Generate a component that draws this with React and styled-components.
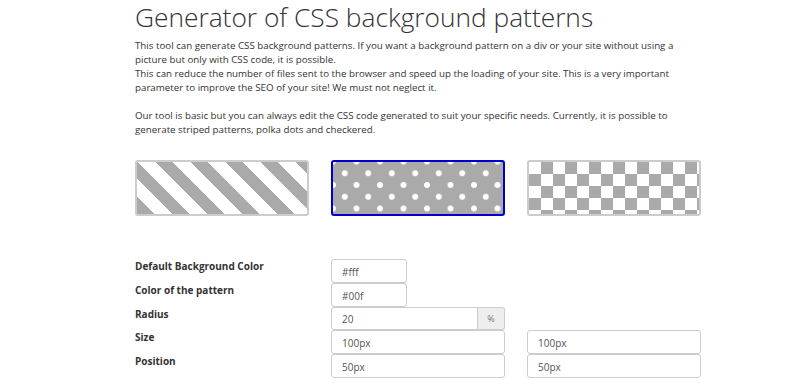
import React from 'react';
import styled, { createGlobalStyle, css } from 'styled-components';

const GlobalStyle = createGlobalStyle`
  html, body {
    margin: 0;
    padding: 0;
    background: #fff;
  }
  body {
    font-family: "Open Sans", "Liberation Sans", sans-serif;
    color: #333;
  }
`;

const Page = styled.div`
  width: 566px;
  padding: 0 0 0 135px;
`;

const Title = styled.h1`
  margin: 0;
  padding-top: 2px;
  font-size: 26.3px;
  line-height: 30px;
  font-weight: 300;
  color: #333;
`;

const Intro = styled.p`
  margin: 7px 0 0 0;
  width: 545px;
  font-size: 9.75px;
  line-height: 14px;
  color: #333;
`;

const PatternRow = styled.div`
  display: grid;
  grid-template-columns: repeat(3, 174px);
  column-gap: 22px;
  margin-top: 23px;
`;

const stripes = css`
  background-color: #fff;
  background-image: repeating-linear-gradient(
    45deg,
    #aaa 0 12.4px,
    #fff 12.4px 24.8px
  );
`;

const dots = css`
  background-color: #aaa;
  background-image: radial-gradient(circle, #fff 2.7px, transparent 3.2px),
    radial-gradient(circle, #fff 2.7px, transparent 3.2px);
  background-size: 23.5px 23.5px;
  background-position: 0 -0.5px, 11.75px 11.25px;
`;

const checks = css`
  background-color: #fff;
  background-image: conic-gradient(
    #aaa 0 25%,
    #fff 0 50%,
    #aaa 0 75%,
    #fff 0
  );
  background-size: 24px 24px;
`;

const PatternBox = styled.div`
  box-sizing: border-box;
  height: 56px;
  border: 2px solid ${(p) => (p.$active ? '#0000cd' : '#ccc')};
  border-radius: 3px;
  cursor: pointer;
  ${(p) => p.$kind === 'stripes' && stripes}
  ${(p) => p.$kind === 'dots' && dots}
  ${(p) => p.$kind === 'checks' && checks}
`;

const Form = styled.div`
  display: grid;
  grid-template-columns: repeat(3, 174px);
  grid-auto-rows: 23.75px;
  column-gap: 22px;
  margin-top: 43px;
`;

const Label = styled.label`
  grid-column: 1;
  font-size: 10px;
  line-height: 14px;
  font-weight: 700;
  color: #333;
`;

const Input = styled.input`
  box-sizing: border-box;
  width: ${(p) => (p.$narrow ? '76px' : '100%')};
  height: 100%;
  margin: 0;
  padding: 2px 10px 0 10px;
  border: 1px solid #ccc;
  border-radius: ${(p) => (p.$grouped ? '3px 0 0 3px' : '3px')};
  font-family: "Open Sans", "Liberation Sans", sans-serif;
  font-size: 10px;
  color: #555;
  background: #fff;
  outline: none;
`;

const Group = styled.div`
  display: flex;
  height: 100%;
`;

const Addon = styled.span`
  box-sizing: border-box;
  flex: 0 0 27px;
  display: flex;
  align-items: center;
  justify-content: center;
  border: 1px solid #ccc;
  border-left: none;
  border-radius: 0 3px 3px 0;
  background: #eee;
  color: #777;
  font-size: 9px;
  padding-top: 1px;
`;

const Empty = styled.span``;

export default function App() {
  return (
    <>
      <GlobalStyle />
      <Page>
        <Title>Generator of CSS background patterns</Title>
        <Intro>
          This tool can generate CSS background patterns. If you want a background pattern on a div
          or your site without using a picture but only with CSS code, it is possible.
          <br />
          This can reduce the number of files sent to the browser and speed up the loading of your
          site. This is a very important parameter to improve the SEO of your site! We must not
          neglect it.
          <br />
          <br />
          Our tool is basic but you can always edit the CSS code generated to suit your specific
          needs. Currently, it is possible to generate striped patterns, polka dots and checkered.
        </Intro>

        <PatternRow>
          <PatternBox $kind="stripes" />
          <PatternBox $kind="dots" $active />
          <PatternBox $kind="checks" />
        </PatternRow>

        <Form>
          <Label>Default Background Color</Label>
          <Input $narrow defaultValue="#fff" />
          <Empty />

          <Label>Color of the pattern</Label>
          <Input $narrow defaultValue="#00f" />
          <Empty />

          <Label>Radius</Label>
          <Group>
            <Input $grouped defaultValue="20" />
            <Addon>%</Addon>
          </Group>
          <Empty />

          <Label>Size</Label>
          <Input defaultValue="100px" />
          <Input defaultValue="100px" />

          <Label>Position</Label>
          <Input defaultValue="50px" />
          <Input defaultValue="50px" />
        </Form>
      </Page>
    </>
  );
}
